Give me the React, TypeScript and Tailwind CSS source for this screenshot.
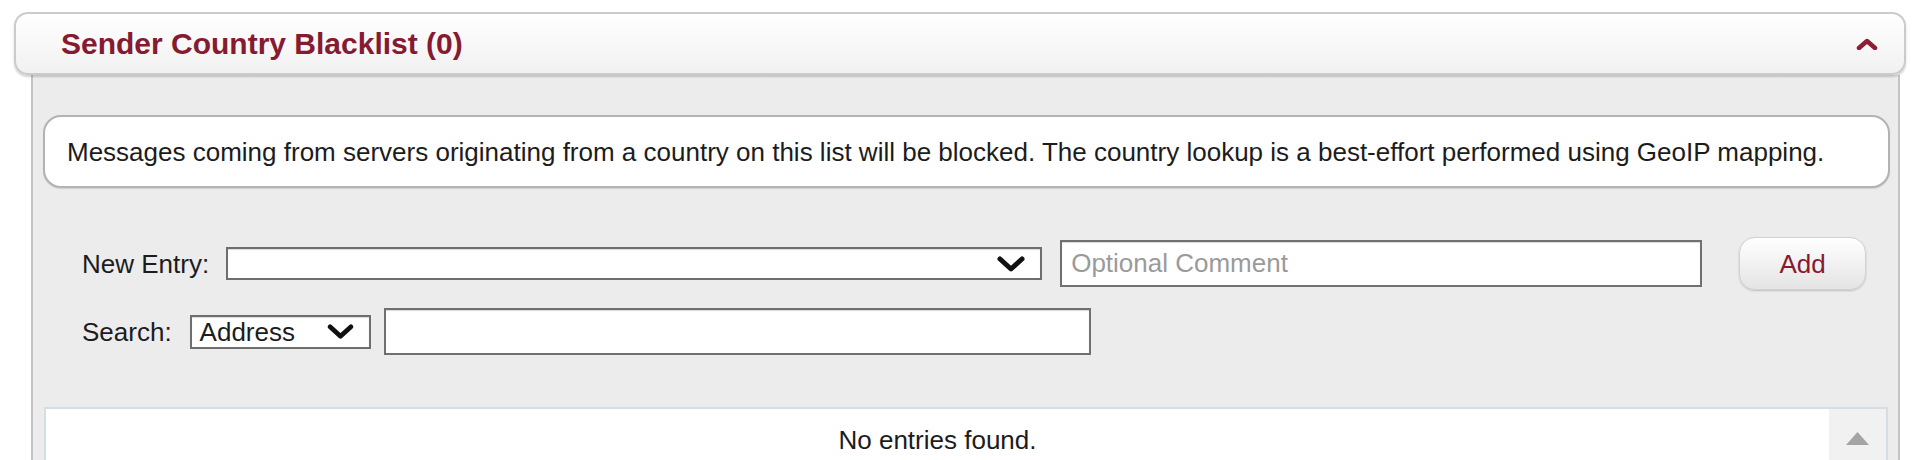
import React from "react";

function Chevron({ className }: { className?: string }) {
  return (
    <svg className={className} viewBox="0 0 30 20" fill="none">
      <polyline
        points="4,5 15,15 26,5"
        stroke="#111"
        strokeWidth={5}
        strokeLinecap="round"
        strokeLinejoin="round"
      />
    </svg>
  );
}

export default function App() {
  return (
    <div className="min-h-screen bg-white pt-[12px] px-[14px] font-['Liberation_Sans',Arial,sans-serif] text-[26px] text-[#1c1c1c]">
      {/* header */}
      <div className="relative z-10 flex h-[63px] items-center justify-between rounded-[14px] border-2 border-[#c9ccc9] bg-gradient-to-b from-white to-[#f1f1f1] pl-[45px] pr-[26px] shadow-[0_2px_2px_rgba(0,0,0,0.18)]">
        <span className="text-[30px] font-bold leading-none text-[#861a30]">
          Sender Country Blacklist (0)
        </span>
        <svg className="h-[12px] w-[22px]" viewBox="0 0 22 12" fill="none">
          <polyline
            points="3,10 11,3 19,10"
            stroke="#8a1f35"
            strokeWidth={4.5}
            strokeLinecap="round"
            strokeLinejoin="round"
          />
        </svg>
      </div>

      {/* panel */}
      <div className="ml-[17px] mr-[6px] min-h-[400px] border-x-2 border-[#c4c4c4] bg-[#ececec] pl-[10px] pr-[8px] pt-[40px]">
        <div className="flex h-[73px] items-center rounded-[18px] border-2 border-[#b3b3b3] bg-white pl-[22px] leading-none shadow-[0_1px_1px_rgba(0,0,0,0.12)]">
          Messages coming from servers originating from a country on this list will be blocked. The country lookup is a best-effort performed using GeoIP mapping.
        </div>

        <div className="pl-[39px]">
          <div className="mt-[49px] flex h-[53px] items-center">
            <span className="leading-none">New Entry:</span>
            <div className="ml-[17px] flex h-[33px] w-[816px] items-center justify-end border-2 border-[#6e6e6e] bg-white pr-[14px] shadow-[inset_0_1px_1px_rgba(0,0,0,0.15)]">
              <Chevron className="h-[20px] w-[30px]" />
            </div>
            <input
              className="ml-[18px] h-[47px] w-[642px] border-2 border-[#707070] bg-white pl-[9px] text-[26px] outline-none placeholder:text-[#9a9a9a] shadow-[inset_0_1px_1px_rgba(0,0,0,0.15)]"
              placeholder="Optional Comment"
            />
            <button
              type="button"
              className="ml-[37px] h-[53px] w-[127px] rounded-[16px] border border-[#d2d2d2] bg-gradient-to-b from-white to-[#e4e4e4] text-[26px] leading-none text-[#861a30] shadow-[0_1px_2px_rgba(0,0,0,0.2)]"
            >
              Add
            </button>
          </div>

          <div className="mt-[18px] flex h-[47px] items-center">
            <span className="leading-none">Search:</span>
            <div className="ml-[18px] flex h-[34px] w-[181px] items-center justify-between border-2 border-[#6e6e6e] bg-white pl-[8px] pr-[14px] leading-none shadow-[inset_0_1px_1px_rgba(0,0,0,0.15)]">
              <span>Address</span>
              <Chevron className="h-[19px] w-[29px]" />
            </div>
            <input className="ml-[13px] h-[47px] w-[707px] border-2 border-[#707070] bg-white outline-none shadow-[inset_0_1px_1px_rgba(0,0,0,0.15)]" />
          </div>
        </div>

        {/* table */}
        <div className="ml-[1px] mr-[2px] mt-[52px] flex h-[80px] border-2 border-[#d4dee4] bg-white">
          <div className="flex-1 pt-[16px] text-center leading-[30px]">
            No entries found.
          </div>
          <div className="flex w-[57px] justify-center bg-[#f1f1f1] pt-[23px]">
            <svg className="h-[13px] w-[23px]" viewBox="0 0 23 13">
              <polygon points="11.5,0 23,13 0,13" fill="#a4a4a4" />
            </svg>
          </div>
        </div>
      </div>
    </div>
  );
}
